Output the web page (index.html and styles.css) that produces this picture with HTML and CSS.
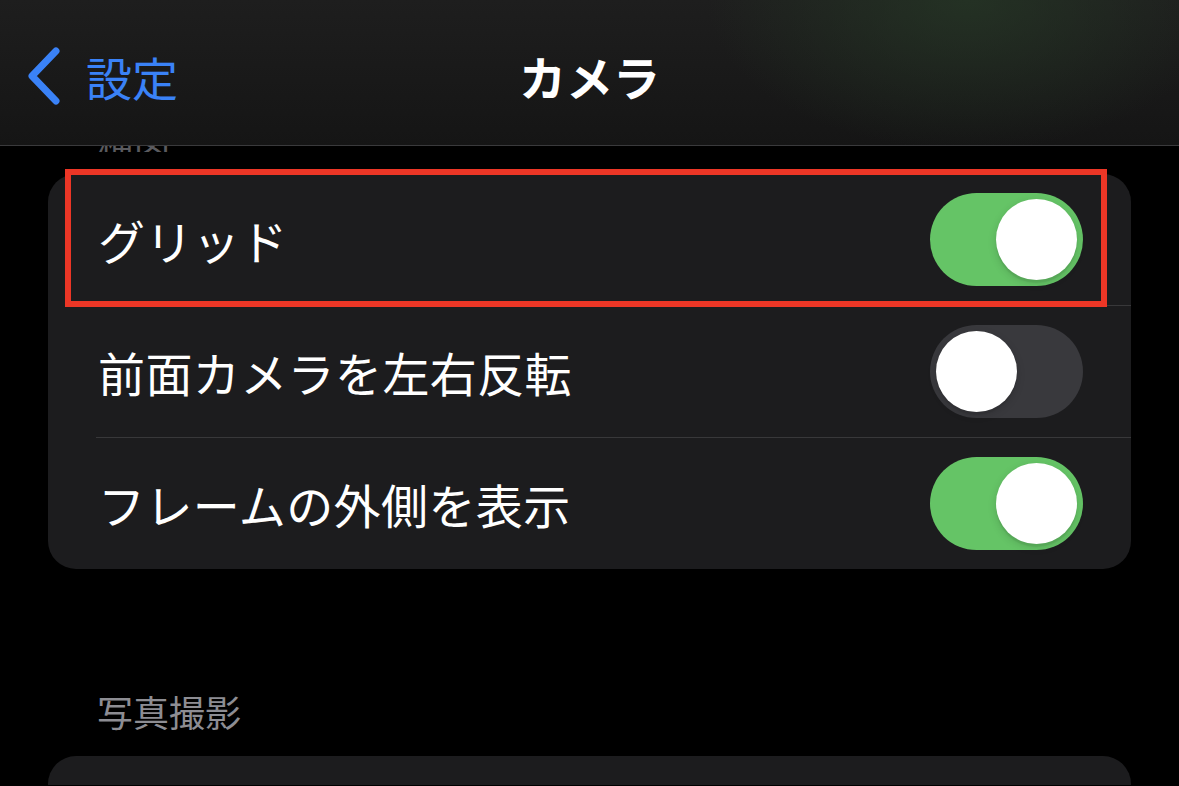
FILE: index.html
```html
<!DOCTYPE html>
<html lang="ja">
<head>
<meta charset="utf-8">
<title>カメラ</title>
<link rel="stylesheet" href="styles.css">
</head>
<body>
<div class="screen">
  <header class="navbar">
    <div class="nav-left">
      <svg class="chevron" width="40" height="62" viewBox="0 0 40 62">
        <path d="M32 6 L8 31 L32 56" fill="none" stroke="#3a82f7" stroke-width="7" stroke-linecap="round" stroke-linejoin="round"/>
      </svg>
      <span class="back-label">設定</span>
    </div>
    <h1 class="nav-title">カメラ</h1>
    <div class="nav-right"></div>
  </header>

  <main class="content">
    <div class="clip-label"><span>構図</span></div>

    <section class="card first-card">
      <div class="row">
        <span class="row-label">グリッド</span>
        <span class="toggle on"><span class="knob"></span></span>
      </div>
      <div class="row">
        <span class="row-label">前面カメラを左右反転</span>
        <span class="toggle"><span class="knob"></span></span>
      </div>
      <div class="row">
        <span class="row-label">フレームの外側を表示</span>
        <span class="toggle on"><span class="knob"></span></span>
      </div>
      <div class="highlight"></div>
    </section>

    <div class="section-label">写真撮影</div>
    <section class="card second-card"></section>
  </main>
</div>
</body>
</html>
```

FILE: styles.css
```css
* { box-sizing: border-box; }

html, body {
  margin: 0;
  padding: 0;
  background: #000;
}

body {
  width: 1179px;
  height: 786px;
  overflow: hidden;
  font-family: "Noto Sans CJK JP", "Noto Sans", sans-serif;
  color: #fff;
}

.screen {
  display: flex;
  flex-direction: column;
  height: 786px;
  overflow: hidden;
}

.navbar {
  height: 146px;
  flex: none;
  display: grid;
  grid-template-columns: 1fr auto 1fr;
  align-items: center;
  padding-top: 6px;
  border-bottom: 1px solid #3a3a3c;
  background:
    radial-gradient(ellipse 260px 150px at 82% 0%, rgba(38, 56, 38, 0.75), rgba(30, 36, 30, 0) 100%),
    linear-gradient(#1e1e1e, #151515);
}

.nav-left {
  display: flex;
  align-items: center;
  gap: 22px;
  padding-left: 24px;
}

.chevron { display: block; }

.back-label {
  font-size: 46px;
  line-height: 1;
  color: #3a82f7;
}

.nav-title {
  margin: 0;
  font-size: 47px;
  font-weight: 700;
  line-height: 1;
  color: #fff;
}

.content {
  display: flex;
  flex-direction: column;
  padding: 0 48px;
}

.clip-label {
  height: 6px;
  overflow: hidden;
  display: flex;
  align-items: flex-end;
  padding-left: 50px;
  font-size: 36px;
  line-height: 36px;
  color: #5a5a5e;
}

.clip-label span {
  display: block;
  margin-bottom: -8px;
}

.card {
  background: #1c1c1e;
  border-radius: 28px;
}

.first-card {
  position: relative;
  margin-top: 22px;
}

.row {
  height: 131px;
  display: flex;
  align-items: center;
  justify-content: space-between;
  padding: 0 48px 0 50px;
}

.row + .row {
  height: 132px;
  border-top: 1px solid #38383a;
  margin-left: 48px;
  padding-left: 2px;
}

.row-label {
  font-size: 47px;
  line-height: 1;
  color: #fff;
  letter-spacing: 0.4px;
}

.toggle {
  width: 153px;
  height: 93px;
  border-radius: 47px;
  background: #39393d;
  display: flex;
  align-items: center;
  padding: 0 6px;
}

.toggle.on {
  background: #65c466;
  justify-content: flex-end;
}

.knob {
  width: 81px;
  height: 81px;
  border-radius: 50%;
  background: #fff;
  box-shadow: 0 3px 8px rgba(0, 0, 0, 0.15), 0 3px 1px rgba(0, 0, 0, 0.06);
}

.highlight {
  position: absolute;
  left: 17px;
  top: -5px;
  width: 1042px;
  height: 138px;
  border: 6px solid #ec3626;
  pointer-events: none;
}

.section-label {
  margin-top: 120px;
  padding-left: 49px;
  font-size: 36px;
  line-height: 44px;
  color: #8d8d93;
}

.second-card {
  margin-top: 23px;
  height: 29px;
  flex: none;
  border-radius: 28px 28px 0 0;
}
```
